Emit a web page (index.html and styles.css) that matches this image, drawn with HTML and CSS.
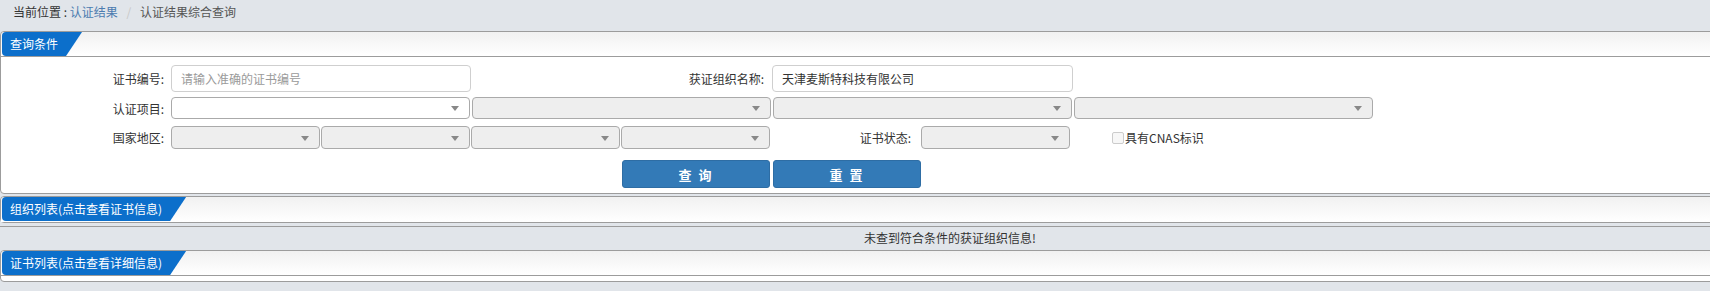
FILE: index.html
```html
<!DOCTYPE html>
<html lang="zh-CN">
<head>
    <meta charset="UTF-8">
    <meta name="viewport" content="width=device-width, initial-scale=1.0">
    <title>认证结果综合查询</title>
    <link rel="stylesheet" href="styles.css">
</head>
<body>
    <div class="page">
        <div class="crumb">
            <span class="crumb-cur">当前位置 :</span>
            <a class="crumb-link">认证结果</a>
            <span class="crumb-sep">/</span>
            <span class="crumb-last">认证结果综合查询</span>
        </div>

        <div class="panel">
            <div class="panel-head"><span class="tab">查询条件</span></div>
            <div class="panel-body">
                <div class="row row-input">
                    <label class="lbl">证书编号:</label>
                    <input class="txt" type="text" placeholder="请输入准确的证书编号">
                    <label class="lbl lbl-org">获证组织名称:</label>
                    <input class="txt txt-org" type="text" value="天津麦斯特科技有限公司">
                </div>
                <div class="row row-sel">
                    <label class="lbl">认证项目:</label>
                    <div class="sel sel-on w299"></div>
                    <div class="sel w299 ml2"></div>
                    <div class="sel w299 ml2"></div>
                    <div class="sel w299 ml2"></div>
                </div>
                <div class="row row-area">
                    <label class="lbl">国家地区:</label>
                    <div class="sel w149"></div>
                    <div class="sel w149 ml1"></div>
                    <div class="sel w149 ml1"></div>
                    <div class="sel w149 ml1"></div>
                    <label class="lbl lbl-status">证书状态:</label>
                    <div class="sel w149"></div>
                    <label class="chk"><span class="chk-box"></span>具有CNAS标识</label>
                </div>
                <div class="row row-btn">
                    <button class="btn">查 询</button>
                    <button class="btn ml3">重 置</button>
                </div>
            </div>
        </div>

        <div class="panel panel-short">
            <div class="panel-head"><span class="tab">组织列表(点击查看证书信息)</span></div>
        </div>

        <div class="empty-msg">未查到符合条件的获证组织信息!</div>

        <div class="panel panel-last">
            <div class="panel-head"><span class="tab">证书列表(点击查看详细信息)</span></div>
            <div class="panel-foot"></div>
        </div>
    </div>
</body>
</html>
```

FILE: styles.css
```css
html, body {
    margin: 0;
    padding: 0;
    background-color: #e1e5ea;
    font-family: "Noto Sans CJK SC", "Liberation Sans", sans-serif;
    font-size: 12px;
    color: #333;
}
.page {
    height: 291px;
    overflow: hidden;
}
.crumb {
    height: 31px;
    line-height: 24px;
    padding-left: 13px;
    box-sizing: border-box;
}
.crumb-cur {
    color: #333;
}
.crumb-link {
    color: #4c7cb0;
}
.crumb-sep {
    color: #c8c8c8;
    margin: 0 6px;
}
.crumb-last {
    color: #555;
}
.panel {
    width: 1730px;
    border: 1px solid #9c9c9c;
    border-radius: 4px;
    background: #fff;
}
.panel-head {
    height: 24px;
    background: linear-gradient(#f1f1f1, #fff);
    border-bottom: 1px solid #9c9c9c;
    border-radius: 4px 4px 0 0;
}
.tab {
    display: inline-block;
    height: 24px;
    line-height: 23px;
    padding: 0 24px 0 8px;
    margin-left: 1px;
    background: #0c6fcb;
    color: #fff;
    border-radius: 4px 0 0 4px;
    clip-path: polygon(0 0, 100% 0, calc(100% - 16px) 100%, 0 100%);
}
.panel-body {
    padding: 8px 0 5px 0;
}
.row {
    display: flex;
    align-items: center;
}
.row-input {
    height: 27px;
}
.row-sel {
    height: 22px;
    margin-top: 5px;
}
.row-area {
    height: 23px;
    margin-top: 7px;
}
.row-btn {
    height: 28px;
    margin-top: 11px;
    padding-left: 621px;
}
.lbl {
    width: 163px;
    margin-right: 7px;
    text-align: right;
    color: #333;
    flex: none;
}
.lbl-org {
    width: 293px;
    margin-right: 8px;
}
.lbl-status {
    width: 141px;
    margin-right: 10px;
}
.txt {
    width: 300px;
    height: 27px;
    box-sizing: border-box;
    border: 1px solid #cfcfcf;
    border-radius: 4px;
    padding: 0 9px;
    font-family: inherit;
    font-size: 12px;
    color: #333;
    outline: none;
}
.txt::placeholder {
    color: #9a9a9a;
}
.txt-org {
    width: 301px;
}
.sel {
    position: relative;
    height: 100%;
    box-sizing: border-box;
    border: 1px solid #aaa;
    border-radius: 4px;
    background: #eee;
    flex: none;
}
.sel-on {
    background: #fff;
}
.sel::after {
    content: "";
    position: absolute;
    right: 10px;
    top: 50%;
    margin-top: -2px;
    border-left: 4px solid transparent;
    border-right: 4px solid transparent;
    border-top: 5px solid #888;
}
.w149 { width: 149px; }
.w299 { width: 299px; }
.ml1 { margin-left: 1px; }
.ml2 { margin-left: 2px; }
.ml3 { margin-left: 3px; }
.chk {
    display: flex;
    align-items: center;
    margin-left: 42px;
    color: #333;
}
.chk-box {
    width: 10px;
    height: 10px;
    border: 1px solid #ccc;
    border-radius: 2px;
    background: #f7f7f7;
    margin-right: 1px;
}
.btn {
    width: 148px;
    height: 28px;
    border: 1px solid #2e6da4;
    border-radius: 3px;
    background: #337ab7;
    color: #fff;
    font-family: inherit;
    font-size: 13px;
    font-weight: bold;
    letter-spacing: 2px;
    padding: 0;
}
.panel-short {
    margin-top: 2px;
}
.panel-short .panel-head {
    border-bottom: none;
    height: 25px;
}
.empty-msg {
    margin-top: 3px;
    height: 23px;
    line-height: 22px;
    border-top: 1px solid #9c9c9c;
    padding-left: 190px;
    text-align: center;
    width: 1520px;
}
.panel-last .panel-foot {
    height: 5px;
}
```
